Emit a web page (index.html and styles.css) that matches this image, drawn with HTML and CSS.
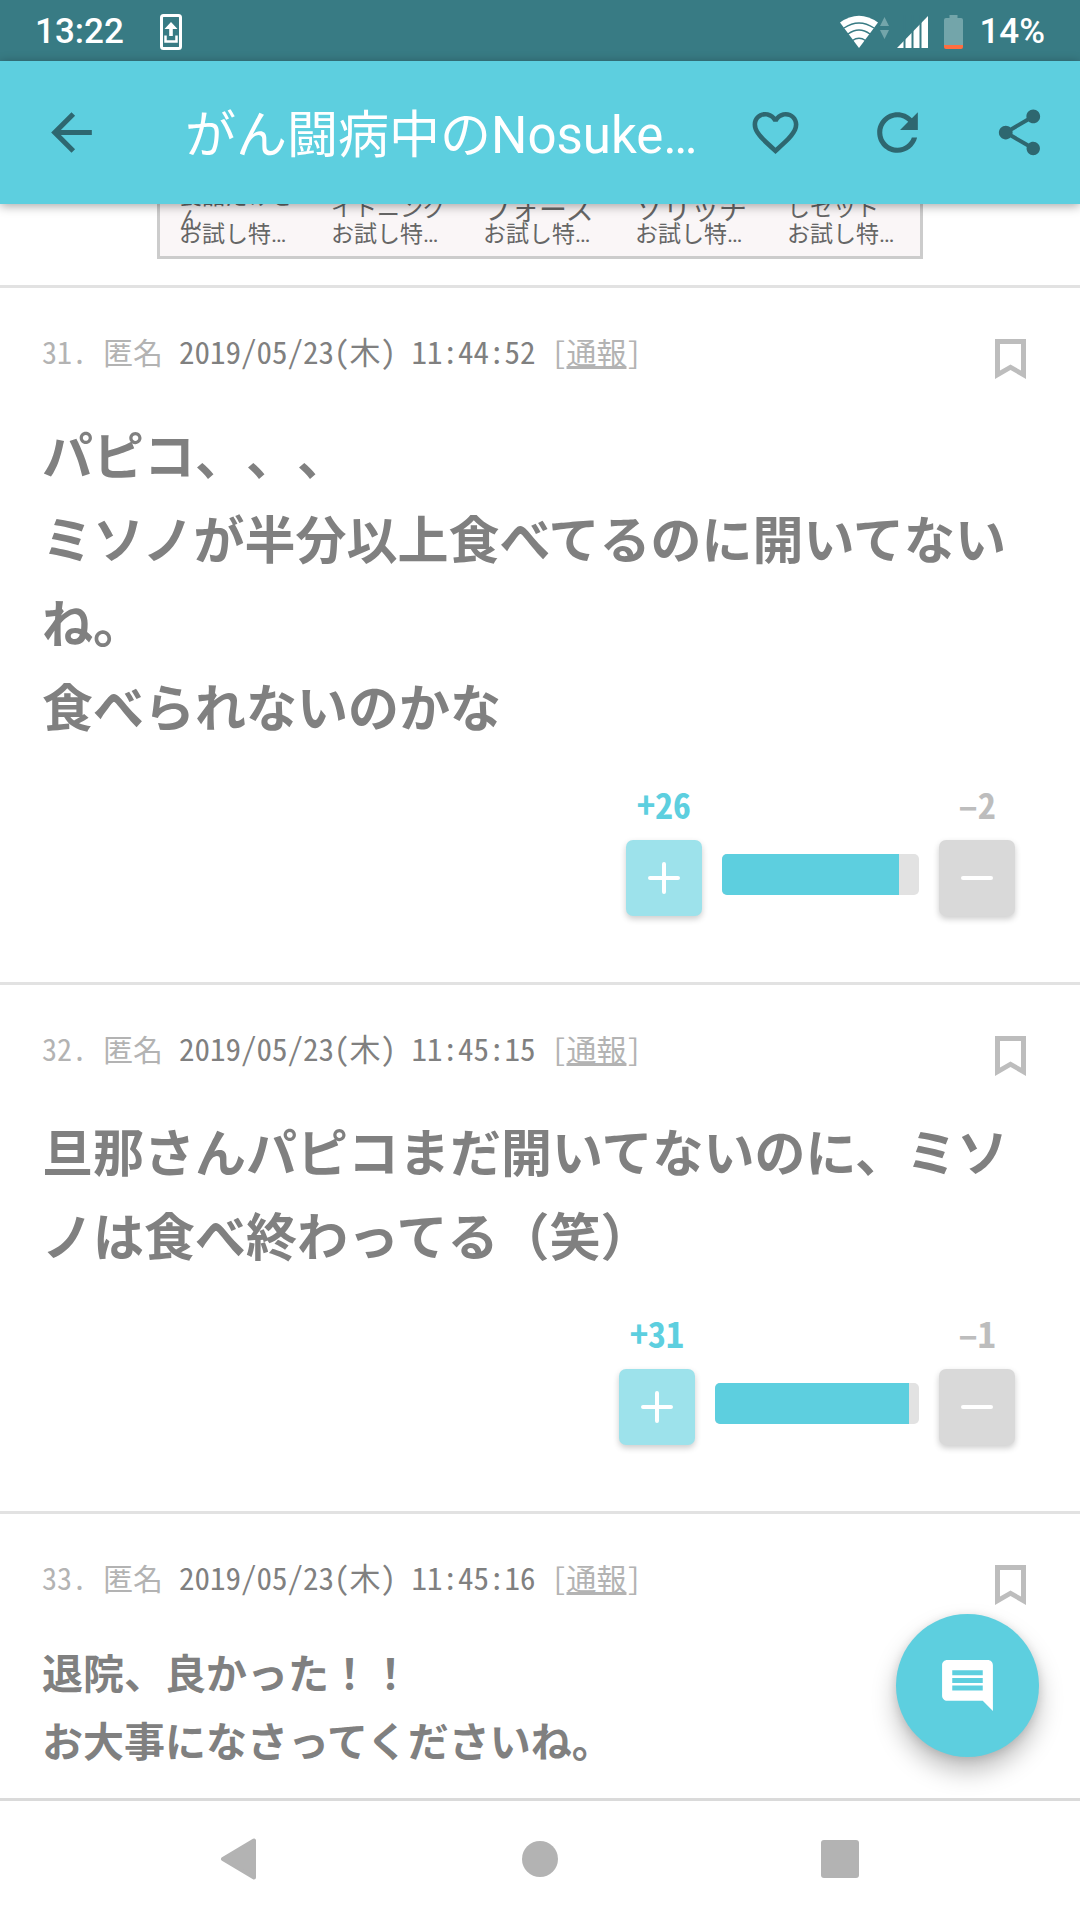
FILE: index.html
```html
<!DOCTYPE html>
<html lang="ja">
<head>
  <meta charset="UTF-8" />
  <meta name="viewport" content="width=device-width, initial-scale=1">
  <title>がん闘病中のNosuke</title>
  <link rel="stylesheet" href="styles.css">
</head>
<body>

<div class="status-bar">
  <span>13:22</span>
  <svg class="update-icon" width="24" height="38" viewBox="0 0 24 38">
    <rect x="2.5" y="2.5" width="19" height="33" rx="2" fill="none" stroke="#fff" stroke-width="3"/>
    <path d="M12 9l6.500 7h-4.700v7h-3.600v-7H5.500z" fill="#fff"/>
    <path d="M6.500 22.500v6h11v-6" fill="none" stroke="#fff" stroke-width="2.500"/>
  </svg>
  <div class="status-right">
    <svg width="88" height="34" viewBox="0 0 88 34">
      <path d="M0 7.500Q19 -6 38 7.500L19 33z" fill="#fff"/>
      <path d="M4 13Q19 3 34 13M8 19Q19 11 30 19M12.500 25.500Q19 21 25.500 25.500" fill="none" stroke="#387b84" stroke-width="1.500"/>
      <path d="M44.500 2l4.500 9h-9zM44.500 24l4.500-9h-9z" fill="#73a5aa"/>
      <path d="M57 33L88 1v32z" fill="#fff"/>
      <path d="M64.500 0v34M72.500 0v34M80.500 0v34" stroke="#387b84" stroke-width="2"/>
    </svg>
    <svg width="19" height="34" viewBox="0 0 19 34">
      <path d="M5.500 0h8v3H17a2 2 0 0 1 2 2v25H0V5a2 2 0 0 1 2-2h3.500z" fill="#73a5aa"/>
      <path d="M0 30h19v2a2 2 0 0 1-2 2H2a2 2 0 0 1-2-2z" fill="#ff6e40"/>
    </svg>
    <span>14%</span>
  </div>
</div>

<header class="app-bar">
  <button class="bar-btn back-btn" aria-label="戻る">
    <svg width="61" height="61" viewBox="0 0 24 24"><path d="M20 11H7.830l5.590-5.590L12 4l-8 8 8 8 1.410-1.410L7.830 13H20v-2z"/></svg>
  </button>
  <h1 class="title">がん闘病中のNosuke…</h1>
  <button class="bar-btn" aria-label="お気に入り">
    <svg width="55" height="55" viewBox="0 0 24 24"><path d="M16.500 3c-1.740 0-3.410.81-4.500 2.090C10.910 3.810 9.240 3 7.500 3 4.420 3 2 5.420 2 8.500c0 3.780 3.400 6.860 8.550 11.540L12 21.350l1.450-1.320C18.600 15.360 22 12.280 22 8.500 22 5.420 19.580 3 16.500 3zm-4.400 15.550l-.1.100-.1-.1C7.140 14.240 4 11.390 4 8.500 4 6.500 5.500 5 7.500 5c1.540 0 3.040.99 3.570 2.360h1.870C13.460 5.990 14.960 5 16.500 5c2 0 3.500 1.500 3.500 3.500 0 2.890-3.140 5.740-7.900 10.050z"/></svg>
  </button>
  <button class="bar-btn" aria-label="更新">
    <svg width="61" height="61" viewBox="0 0 24 24"><path d="M17.650 6.350C16.200 4.900 14.210 4 12 4c-4.420 0-7.990 3.580-7.990 8s3.570 8 7.990 8c3.730 0 6.840-2.550 7.730-6h-2.080c-.82 2.330-3.040 4-5.650 4-3.310 0-6-2.690-6-6s2.690-6 6-6c1.660 0 3.140.69 4.220 1.780L13 11h7V4l-2.350 2.350z"/></svg>
  </button>
  <button class="bar-btn" aria-label="共有">
    <svg width="55" height="55" viewBox="0 0 24 24"><path d="M18 16.080c-.76 0-1.440.3-1.960.77L8.910 12.700c.05-.23.09-.46.09-.7s-.04-.47-.09-.7l7.050-4.110c.54.5 1.250.81 2.040.81 1.660 0 3-1.340 3-3s-1.340-3-3-3-3 1.340-3 3c0 .24.04.47.09.7L8.040 9.810C7.500 9.310 6.790 9 6 9c-1.660 0-3 1.340-3 3s1.340 3 3 3c.79 0 1.500-.31 2.040-.81l7.120 4.160c-.05.21-.08.43-.08.65 0 1.610 1.310 2.920 2.920 2.920 1.610 0 2.920-1.310 2.920-2.920s-1.310-2.920-2.920-2.920z"/></svg>
  </button>
</header>

<main class="content">
  <div class="ad">
    <div class="ad-item"><p class="ad-name ad-name-wrap">食品だけさん</p><p class="ad-price">お試し特…</p></div>
    <div class="ad-item"><p class="ad-name">イトニング</p><p class="ad-price">お試し特…</p></div>
    <div class="ad-item"><p class="ad-name ad-name-big">フォース</p><p class="ad-price">お試し特…</p></div>
    <div class="ad-item"><p class="ad-name ad-name-big">ソリッチ</p><p class="ad-price">お試し特…</p></div>
    <div class="ad-item"><p class="ad-name">しセット</p><p class="ad-price">お試し特…</p></div>
  </div>

  <article class="post">
    <div class="meta">
      <span>31.</span>
      <span>匿名</span>
      <time>2019/05/23(木) 11:44:52</time>
      <span>[<a href="#">通報</a>]</span>
      <button class="bookmark" aria-label="ブックマーク">
        <svg width="31" height="40" viewBox="0 0 31 40"><path d="M0 0h31v40l-15.500-9L0 40zM5 5v26.500l10.500-6 10.500 6V5z" fill-rule="evenodd"/></svg>
      </button>
    </div>
    <p class="body">パピコ、、、<br>ミソノが半分以上食べてるのに開いてないね。<br>食べられないのかな</p>
    <div class="votes">
      <div class="vote plus">
        <span>+26</span>
        <button aria-label="プラス"><svg width="32" height="32" viewBox="0 0 32 32"><path d="M2 16h28M16 2v28"/></svg></button>
      </div>
      <div class="bar" style="width: 197px"><div class="fill" style="width: 90%"></div></div>
      <div class="vote minus">
        <span>–2</span>
        <button aria-label="マイナス"><svg width="32" height="32" viewBox="0 0 32 32"><path d="M2 16h28"/></svg></button>
      </div>
    </div>
  </article>

  <article class="post">
    <div class="meta">
      <span>32.</span>
      <span>匿名</span>
      <time>2019/05/23(木) 11:45:15</time>
      <span>[<a href="#">通報</a>]</span>
      <button class="bookmark" aria-label="ブックマーク">
        <svg width="31" height="40" viewBox="0 0 31 40"><path d="M0 0h31v40l-15.500-9L0 40zM5 5v26.500l10.500-6 10.500 6V5z" fill-rule="evenodd"/></svg>
      </button>
    </div>
    <p class="body">旦那さんパピコまだ開いてないのに、ミソノは食べ終わってる（笑）</p>
    <div class="votes">
      <div class="vote plus">
        <span>+31</span>
        <button aria-label="プラス"><svg width="32" height="32" viewBox="0 0 32 32"><path d="M2 16h28M16 2v28"/></svg></button>
      </div>
      <div class="bar" style="width: 204px"><div class="fill" style="width: 95%"></div></div>
      <div class="vote minus">
        <span>–1</span>
        <button aria-label="マイナス"><svg width="32" height="32" viewBox="0 0 32 32"><path d="M2 16h28"/></svg></button>
      </div>
    </div>
  </article>

  <article class="post">
    <div class="meta">
      <span>33.</span>
      <span>匿名</span>
      <time>2019/05/23(木) 11:45:16</time>
      <span>[<a href="#">通報</a>]</span>
      <button class="bookmark" aria-label="ブックマーク">
        <svg width="31" height="40" viewBox="0 0 31 40"><path d="M0 0h31v40l-15.500-9L0 40zM5 5v26.500l10.500-6 10.500 6V5z" fill-rule="evenodd"/></svg>
      </button>
    </div>
    <p class="body body-small">退院、良かった！！<br>お大事になさってくださいね。</p>
  </article>
</main>

<button class="fab" aria-label="コメントする">
  <svg width="61" height="61" viewBox="0 0 24 24"><path d="M21.990 4c0-1.100-.89-2-1.990-2H4c-1.100 0-2 .9-2 2v12c0 1.100.9 2 2 2h14l4 4-.01-18zM18 14H6v-2h12v2zm0-3H6V9h12v2zm0-3H6V6h12v2z"/></svg>
</button>

<nav class="nav-bar">
  <button aria-label="戻る"><svg width="40" height="42" viewBox="0 0 40 42"><path d="M34 2.500v37L3 21z" stroke="#b3b3b3" stroke-width="4" stroke-linejoin="round"/></svg></button>
  <button aria-label="ホーム"><svg width="40" height="42" viewBox="0 0 40 42"><circle cx="20" cy="21" r="18"/></svg></button>
  <button aria-label="履歴"><svg width="40" height="42" viewBox="0 0 40 42"><rect x="1" y="2" width="38" height="38" rx="3"/></svg></button>
</nav>

</body>
</html>
```
FILE: styles.css
```css
* {
  box-sizing: border-box;
}

body {
  margin: 0;
  height: 100vh;
  display: flex;
  flex-direction: column;
  overflow: hidden;
  background: #fff;
  color: #808080;
  font-family: Roboto, "Noto Sans CJK JP", sans-serif;
}

button {
  display: flex;
  align-items: center;
  justify-content: center;
  padding: 0;
  border: none;
  background: none;
  cursor: pointer;
}

p {
  margin: 0;
}

/* STATUS BAR */
.status-bar {
  display: flex;
  align-items: center;
  flex-shrink: 0;
  height: 61px;
  padding: 2px 35px 0;
  background: #387b84;
  color: #fff;
  font-size: 35px;
  font-weight: 500;
}

.update-icon {
  margin-left: 35px;
}

.status-right {
  display: flex;
  align-items: center;
  gap: 16px;
  margin-left: auto;
}

/* APP BAR */
.app-bar {
  display: flex;
  align-items: center;
  flex-shrink: 0;
  height: 143px;
  background: #5dcfdf;
  box-shadow: 0 2px 10px rgba(0, 0, 0, 0.35);
  position: relative;
  z-index: 1;
}

.bar-btn {
  width: 122px;
  height: 100%;
  flex-shrink: 0;
}

.bar-btn svg {
  fill: #2e6770;
}

.back-btn {
  width: 143px;
}

.title {
  flex: 1;
  margin: 0 0 0 42px;
  padding-bottom: 4px;
  color: #fff;
  font-size: 51px;
  font-weight: 400;
  white-space: nowrap;
}

/* CONTENT */
.content {
  flex: 1;
  min-height: 0;
  overflow: hidden;
  font-family: "Noto Sans CJK JP", sans-serif;
}

.ad {
  display: flex;
  width: 766px;
  height: 55px;
  margin: 0 auto 26px;
  padding: 0 0 8px 19px;
  overflow: hidden;
  border: 3px solid #ccc;
  border-top: none;
  background: #faf6f7;
  color: #666;
  font-family: Roboto, "Noto Sans CJK JP", sans-serif;
  font-size: 23px;
  line-height: 27px;
}

.ad-item {
  display: flex;
  flex-direction: column;
  flex-shrink: 0;
  justify-content: flex-end;
  width: 152px;
}

.ad-name {
  width: 116px;
  margin-bottom: -1px;
}

.ad-name-wrap {
  margin-bottom: -12px;
  line-height: 24px;
}

.ad-name-big {
  margin-bottom: -3px;
  font-size: 28px;
}

.post {
  padding: 51px 42px 66px;
  border-top: 3px solid #e2e2e2;
}

.meta {
  display: flex;
  align-items: flex-start;
  gap: 16px;
  color: #b3b3b3;
  font-size: 30px;
  line-height: 24px;
  font-feature-settings: "hwid";
}

.meta time {
  color: #808080;
  font-size: 31px;
}

.meta a {
  color: inherit;
}

.bookmark {
  margin: 0 12px 0 auto;
}

.bookmark svg {
  fill: #bdbdbd;
}

.body {
  margin-top: 32px;
  font-size: 51px;
  font-weight: 700;
  line-height: 84px;
  text-spacing-trim: space-all;
}

.body-small {
  font-size: 41px;
  line-height: 68px;
}

.votes {
  display: flex;
  justify-content: flex-end;
  align-items: flex-end;
  gap: 20px;
  margin-top: 37px;
  padding-right: 23px;
}

.vote {
  display: flex;
  flex-direction: column;
  align-items: center;
  font-size: 36px;
  font-weight: 700;
  line-height: 38px;
  font-feature-settings: "hwid";
}

.vote button {
  width: 76px;
  height: 76px;
  margin-top: 18px;
  border-radius: 7px;
  box-shadow: 0 3px 6px rgba(0, 0, 0, 0.2);
}

.vote path {
  stroke: #fff;
  stroke-width: 4;
  stroke-linecap: round;
}

.plus {
  color: #5dcfdf;
}

.plus button {
  background: #9de2eb;
}

.minus {
  color: #bdbdbd;
}

.minus button {
  background: #d9d9d9;
}

.bar {
  height: 41px;
  margin-bottom: 21px;
  overflow: hidden;
  border-radius: 5px;
  background: #e2e2e2;
}

.fill {
  height: 100%;
  background: #5dcfdf;
}

/* floating comment button */
.fab {
  position: absolute;
  right: 41px;
  bottom: 163px;
  width: 143px;
  height: 143px;
  border-radius: 50%;
  background: #5dcfdf;
  box-shadow: 0 14px 24px rgba(0, 0, 0, 0.25), 0 2px 10px rgba(0, 0, 0, 0.12);
}

.fab svg {
  fill: #fff;
}

/* NAVIGATION BAR */
.nav-bar {
  display: flex;
  flex-shrink: 0;
  height: 122px;
  padding: 0 90px 3px;
  border-top: 3px solid #dadada;
  background: #fff;
}

.nav-bar button {
  flex: 1;
}

.nav-bar svg {
  fill: #b3b3b3;
}
```
